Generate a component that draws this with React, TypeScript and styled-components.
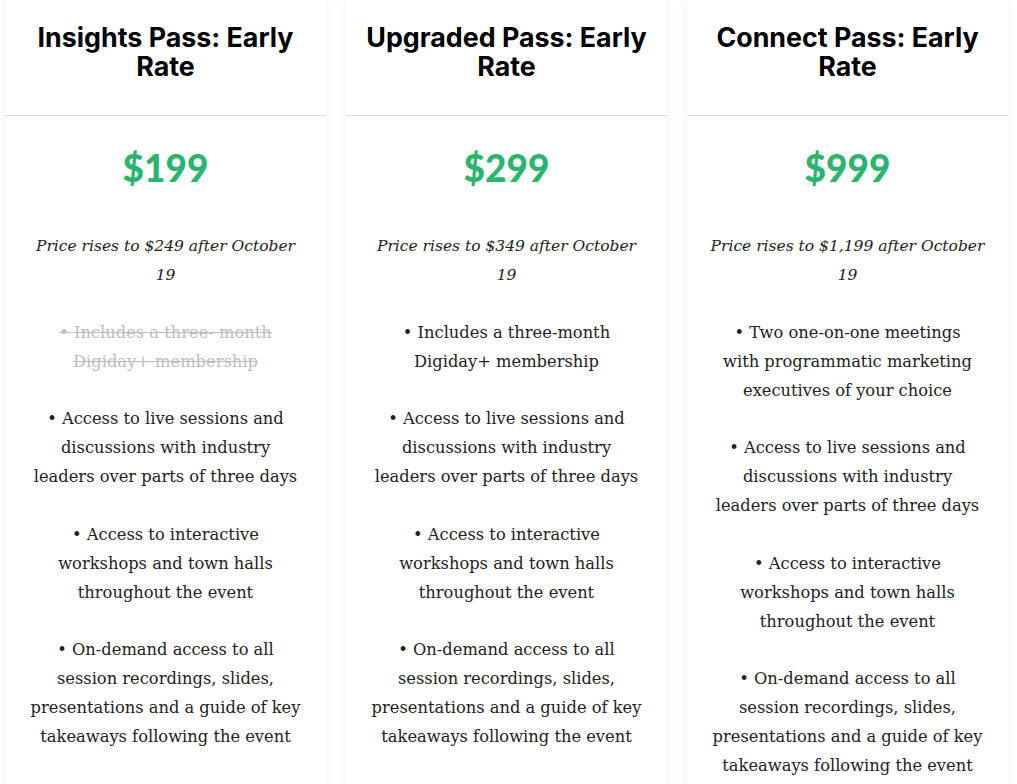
import React from "react";
import styled, { createGlobalStyle } from "styled-components";

const Global = createGlobalStyle`
  html, body { margin: 0; padding: 0; background: #ffffff; }
  body { font-family: "DejaVu Serif", serif; }
`;

const Row = styled.div`
  display: flex;
  gap: 20px;
  padding: 0 5px;
  align-items: flex-start;
`;

const Card = styled.div`
  width: 321px;
  flex: 0 0 321px;
  background: #fff;
  box-shadow: 0 0 8px rgba(0, 0, 0, 0.07);
`;

const Header = styled.div`
  padding: 23px 14px 34px;
  border-bottom: 1px solid #dcdcdc;
  text-align: center;
`;

const Title = styled.h2`
  margin: 0;
  font-family: "Inter", "Liberation Sans", sans-serif;
  font-weight: 700;
  font-size: 26.8px;
  line-height: 29px;
  color: #000;
`;

const Body = styled.div`
  padding: 27px 23px 40px;
  text-align: center;
`;

const Price = styled.div`
  font-family: "Lato", "Liberation Sans", sans-serif;
  font-weight: 900;
  font-size: 37px;
  line-height: 50px;
  color: #2ab56f;
  margin-bottom: 39px;
`;

const Note = styled.p`
  margin: 0 0 27.5px;
  font-style: italic;
  font-size: 15.5px;
  line-height: 29px;
  color: #222;
`;

const Item = styled.p<{ $struck?: boolean }>`
  margin: 0 0 28.5px;
  font-size: 16.3px;
  line-height: 29px;
  color: ${(p) => (p.$struck ? "#bdbdbd" : "#222")};
  text-decoration: ${(p) => (p.$struck ? "line-through" : "none")};
  &:last-child { margin-bottom: 0; }
`;

type Plan = {
  title: string;
  price: string;
  note: string;
  items: { text: string; struck?: boolean }[];
};

const common = [
  "• Access to live sessions and discussions with industry leaders over parts of three days",
  "• Access to interactive workshops and town halls throughout the event",
  "• On-demand access to all session recordings, slides, presentations and a guide of key takeaways following the event",
];

const plans: Plan[] = [
  {
    title: "Insights Pass: Early Rate",
    price: "$199",
    note: "Price rises to $249 after October 19",
    items: [
      { text: "• Includes a three- month Digiday+ membership", struck: true },
      ...common.map((t) => ({ text: t })),
    ],
  },
  {
    title: "Upgraded Pass: Early Rate",
    price: "$299",
    note: "Price rises to $349 after October 19",
    items: [
      { text: "• Includes a three-month Digiday+ membership" },
      ...common.map((t) => ({ text: t })),
    ],
  },
  {
    title: "Connect Pass: Early Rate",
    price: "$999",
    note: "Price rises to $1,199 after October 19",
    items: [
      { text: "• Two one-on-one meetings with\u00a0programmatic marketing executives of your choice" },
      ...common.map((t) => ({ text: t })),
    ],
  },
];

export default function App() {
  return (
    <>
      <Global />
      <Row>
        {plans.map((p) => (
          <Card key={p.title}>
            <Header>
              <Title>{p.title}</Title>
            </Header>
            <Body>
              <Price>{p.price}</Price>
              <Note>{p.note}</Note>
              {p.items.map((it, i) => (
                <Item key={i} $struck={it.struck}>
                  {it.text}
                </Item>
              ))}
            </Body>
          </Card>
        ))}
      </Row>
    </>
  );
}
